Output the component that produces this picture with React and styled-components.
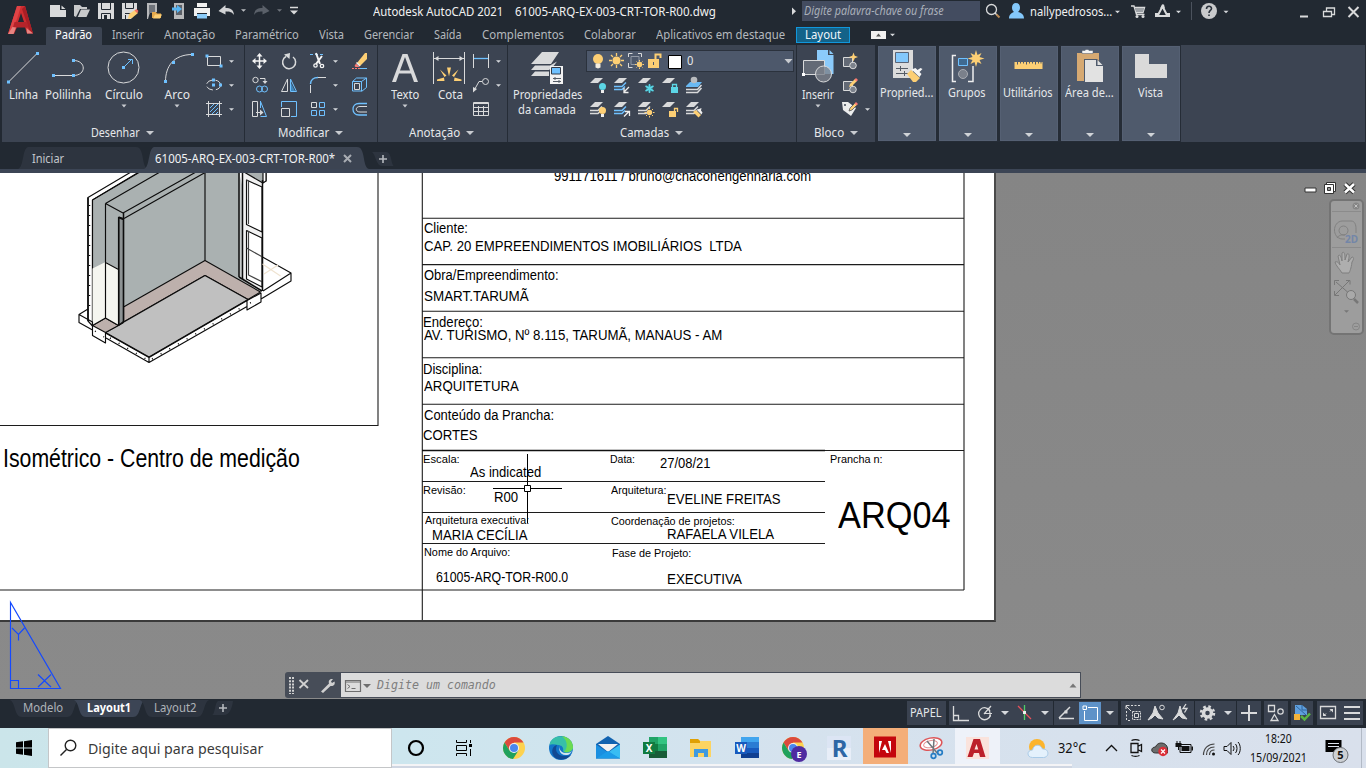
import React, { useLayoutEffect, useRef, useState } from 'react';
import styled, { createGlobalStyle } from 'styled-components';

const Global = createGlobalStyle`
  * { box-sizing: border-box; }
  html, body { margin: 0; padding: 0; overflow: hidden; background: #222932; }
  svg { display: block; flex: none; }
`;

const UI = '"Noto Sans", "Open Sans", sans-serif';
const CAD = '"Liberation Sans", Arial, sans-serif';
const BLUE = '#6fc1ff';
const LIGHT = '#d9dadb';
const GOLD = '#fdcf74';

/* ---------- shared parts ---------- */

const FitBox = styled.span`
  display: block;
  flex: none;
  width: ${(p) => p.$w}px;
  white-space: pre;
`;
const FitInner = styled.span`
  display: inline-block;
  transform-origin: 0 50%;
`;

/* Condenses or widens a label so that it takes exactly w pixels. */
function Fit({ w, children, className }) {
  const ref = useRef(null);
  const [k, setK] = useState(1);
  useLayoutEffect(() => {
    setK(w / ref.current.offsetWidth);
  }, [w]);
  return (
    <FitBox $w={w} className={className}>
      <FitInner ref={ref} style={{ transform: `scaleX(${k})` }}>{children}</FitInner>
    </FitBox>
  );
}

/* Icon whose drawing uses window coordinates; box = [x, y, width, height]. */
const Icon = ({ box, children, ...rest }) => (
  <svg width={box[2]} height={box[3]} viewBox={box.join(' ')} fill="none" {...rest}>{children}</svg>
);

const Caret = ({ x, y, s = 2.5, fill = '#d5d8dc' }) => (
  <path d={`M${x - s} ${y - s / 2}h${2 * s}l${-s} ${s}z`} fill={fill} />
);

const Sq = ({ x, y, c = BLUE, s = 3 }) => <rect x={x - s / 2} y={y - s / 2} width={s} height={s} fill={c} />;

const Window = styled.div`
  width: 1366px;
  height: 768px;
  display: flex;
  flex-direction: column;
  overflow: hidden;
  font-family: ${UI};
  font-size: 12px;
  line-height: 16px;
  color: #e6e8ea;
  background: #222932;
`;

/* ---------- title bar and ribbon tabs ---------- */

const Header = styled.header`
  height: 45px;
  flex: none;
  display: grid;
  grid-template-columns: 46px 1320px;
`;
const HeaderMain = styled.div`
  display: flex;
  flex-direction: column;
`;
const TitleRow = styled.div`
  height: 27px;
  display: flex;
  align-items: flex-start;
`;
const TitleText = styled(Fit)`
  margin: 4px 0 0 ${(p) => p.$ml}px;
  color: #f1f1f1;
`;
const SearchBox = styled.div`
  width: 178px;
  height: 20px;
  margin: 1px 0 0 6px;
  padding: 2px 2px;
  background: #434c60;
  color: #a9afb9;
  font-style: italic;
`;
const TabRow = styled.nav`
  height: 18px;
  display: flex;
`;
const RibbonTab = styled.div`
  padding: 0 10px 0 ${(p) => (p.$on ? 9 : 10)}px;
  height: 18px;
  color: ${(p) => (p.$on ? '#fff' : '#b4b8bd')};
  background: ${(p) => (p.$on ? '#3c4452' : 'transparent')};
  border-radius: 2px 2px 0 0;
`;
const LayoutTab = styled.div`
  width: 54px;
  height: 16px;
  margin-left: 1px;
  padding-left: 8px;
  line-height: 14px;
  border: 1px solid #1197dc;
  background: #146389;
  color: #eef5fa;
`;

const TABS = [
  ['Padrão', 37, true], ['Inserir', 32], ['Anotação', 51], ['Paramétrico', 64], ['Vista', 25],
  ['Gerenciar', 50], ['Saída', 28], ['Complementos', 82], ['Colaborar', 52], ['Aplicativos em destaque', 129],
];

function QuickAccess() {
  return (
    <Icon box={[46, 0, 258, 27]}>
      <path d="M50 5h10v5h6v7H50zM61.500 5.500l4 3.500h-4z" fill={LIGHT} />
      <path d="M74 16V5h6l2 2h5v2h-7l-4 8zM78 16.500l3-7h9l-3.500 7.500h-9z" fill="#c9cacb" />
      <path d="M98 3h16v16H98z" fill={LIGHT} />
      <path d="M101.500 3v6.500h9V3M101.500 19v-5.500h9V19" stroke="#222932" />
      <path d="M104 15h3v4h-3z" fill="#222932" />
      <path d="M122 3h15v8l-6 8h-9z" fill={LIGHT} />
      <path d="M125.500 3v5.500h8V3M125 13.500h6M125.500 19v-4" stroke="#222932" />
      <path d="M129 14l6-4 3 3-6 5-4 1z" fill={GOLD} /><path d="M134.500 10.500l2-1.500 2 2-1.500 2z" fill="#f46e63" />
      <path d="M147 3h10v9h-7l-2 7h-1z" fill="#b7b8ba" /><path d="M149 5h6v8h-6z" fill="#6f737a" />
      <path d="M152 12h4l1 1.500h4V18h-9z" fill="#e5a94c" /><path d="M155 14.500h7l-2 4h-7z" fill={GOLD} />
      <path d="M174 3h10v16h-10z" fill="#b7b8ba" /><path d="M176 5h6v10h-6z" fill="#5b6068" />
      <path d="M172 7.500h5V5l5 4-5 4v-2.500h-5z" fill="#56b4f2" />
      <path d="M197 3h10v4h-10zM194 8h16v8h-3v-3h-10v3h-3z" fill="#f1f1f1" /><path d="M197 14h10v4.500h-10z" fill="#8bcbf8" />
      <path d="M218.500 11l7-6v3c5 0 8 1.500 8.500 7-2-3-4-3.500-8.500-3.500v3z" fill="#d2d3d5" />
      <Caret x={243.500} y={10.500} fill="#b9bcc0" />
      <path d="M269.500 11l-7-6v3c-5 0-8 1.500-8.500 7 2-3 4-3.500 8.500-3.500v3z" fill="#5a6069" />
      <Caret x={279.500} y={10.500} fill="#70757d" />
      <path d="M290 7.500h8" stroke={LIGHT} strokeWidth="1.500" /><path d="M290 10.500h8l-4 4z" fill={LIGHT} />
    </Icon>
  );
}

function TopBar() {
  return (
    <Header>
      <Icon box={[0, 0, 46, 45]}>
        <path d="M17 6h8l8 27.500h-6L25 27h-8l-3 7H8zM21 13l-3 9h6z" fill="#cf2e31" fillRule="evenodd" />
        <path d="M17 6h4l-4 13-4 9-5 6z" fill="#e04346" />
        <path d="M25 6l8 27.500-4-4L22 9z" fill="#a91e25" />
        <path d="M14.500 22H27l1.500 5.500H13z" fill="#b5242a" />
        <path d="M12.500 27L8 34h5.500l2.500-6.500zM26.500 28l.5 5.500h6z" fill="#e78481" />
      </Icon>
      <HeaderMain>
        <TitleRow>
          <QuickAccess />
          <TitleText w={130} $ml={69}>Autodesk AutoCAD 2021</TitleText>
          <TitleText w={201} $ml={12}>61005-ARQ-EX-003-CRT-TOR-R00.dwg</TitleText>
          <Icon box={[716, 0, 80, 27]}><path d="M792 7.500v7.500l4-3.750z" fill={LIGHT} /></Icon>
          <SearchBox><Fit w={140}>Digite palavra-chave ou frase</Fit></SearchBox>
          <Icon box={[980, 0, 50, 27]}>
            <circle cx="991.500" cy="9.500" r="5" stroke={LIGHT} strokeWidth="1.300" /><path d="M995 13l2 2" stroke={LIGHT} strokeWidth="1.500" /><path d="M996.500 14.500l3 3" stroke="#b98853" strokeWidth="2" />
            <path d="M1009 18.500c0-4 3-6 5-6.500-1.500-1-2-3-2-4.500 0-2.500 1.500-4.500 4-4.500s4 2 4 4.500c0 1.500-.5 3.500-2 4.500 3 .5 6 2.500 6 6.500z" fill="#84c8fb" />
          </Icon>
          <TitleText w={82} $ml={0}>nallypedrosos...</TitleText>
          <Icon box={[1112, 0, 254, 27]}>
            <Caret x={1117.500} y={12} />
            <path d="M1131 6h3l2.500 8.500h8M1135 7.500h9.500l-1.500 5h-7" stroke={LIGHT} strokeWidth="1.400" /><path d="M1135 8h9l-1 4h-7z" fill="#9da1a6" /><circle cx="1137" cy="16.500" r="1.500" fill={LIGHT} /><circle cx="1143" cy="16.500" r="1.500" fill={LIGHT} />
            <path d="M1162.500 6.500l-5 9.500h10z" stroke={LIGHT} strokeWidth="2" /><path d="M1160 8.500l2-4h2l1 4zM1155 13h4v4h-4zM1166 13h4v4h-4z" fill={LIGHT} />
            <Caret x={1178.500} y={12} />
            <path d="M1191.500 2v18" stroke="#4b525d" />
            <circle cx="1209" cy="11" r="8" fill="#c9cacc" />
            <path d="M1206.500 9c0-3.500 5-3.500 5-.5 0 2-2.500 2-2.500 4.500M1209 14.500v1.500" stroke="#2b323c" strokeWidth="1.600" />
            <Caret x={1226} y={12} />
            <path d="M1300 16.500h8" stroke={LIGHT} strokeWidth="2" />
            <path d="M1323.500 11.500h8v5h-8zM1326.500 11V8h8v6.500h-3" stroke={LIGHT} strokeWidth="1.300" />
            <path d="M1348.500 7l10 10M1358.500 7l-10 10" stroke={LIGHT} strokeWidth="2" />
          </Icon>
        </TitleRow>
        <TabRow>
          {TABS.map(([t, w, on]) => <RibbonTab key={t} $on={on}><Fit w={w}>{t}</Fit></RibbonTab>)}
          <LayoutTab><Fit w={36}>Layout</Fit></LayoutTab>
          <Icon box={[851, 27, 50, 18]}>
            <path d="M872 31h15v8h-15z" fill="#f0f0f0" /><path d="M877 36.500l2.500-3 2.500 3z" fill="#555" />
            <Caret x={893.500} y={35} s={2.500} />
          </Icon>
        </TabRow>
      </HeaderMain>
    </Header>
  );
}

/* ---------- ribbon ---------- */

const RibbonBar = styled.section`
  height: 97px;
  flex: none;
  display: flex;
  padding-left: 2px;
`;
const PanelBox = styled.div`
  width: ${(p) => p.$w}px;
  height: 97px;
  display: flex;
  flex-direction: column;
  background: #3c4452;
  border-right: 1px solid #252c36;
`;
const PanelBody = styled.div`
  height: 79px;
  display: flex;
`;
const PanelTitle = styled.div`
  height: 18px;
  display: flex;
  align-items: center;
  justify-content: center;
  gap: 6px;
  padding-right: 2px;
`;
const BigButton = styled.div`
  width: ${(p) => p.$w}px;
  display: flex;
  flex-direction: column;
  align-items: center;
  flex: none;
`;
const BigLabel = styled(Fit)`
  height: 15px;
`;
const ToolGrid = styled.div`
  display: grid;
  grid-template-columns: ${(p) => p.$cols};
  grid-auto-rows: 24px;
  padding-top: ${(p) => p.$top ?? 4}px;
  align-content: start;
`;
const Collapsed = styled.div`
  width: 58px;
  height: 95px;
  margin: 1px 0 0 3px;
  display: flex;
  flex-direction: column;
  align-items: center;
  background: #4f5a6c;
  border: 1px solid #556073;
`;
const CollapsedLabel = styled(Fit)`
  position: relative;
  left: -1px;
`;
const CollapsedArea = styled.div`
  width: 306px;
  display: flex;
  background: #252c36;
  margin-left: -2px;
`;
const RibbonRest = styled.div`
  flex: 1;
  background: #3c4452;
  margin-right: 1px;
`;
const LayerColumn = styled.div`
  display: flex;
  flex-direction: column;
`;
const LayerCombo = styled.div`
  width: 208px;
  height: 22px;
  margin-top: 5px;
  display: flex;
  align-items: center;
  background: #4d586b;
  border: 1px solid #2b323d;
`;

function Panel({ w, title, tw, children }) {
  return (
    <PanelBox $w={w}>
      <PanelBody>{children}</PanelBody>
      <PanelTitle>
        <Fit w={tw}>{title}</Fit>
        <svg width="8" height="5"><path d="M0 0h8l-4 4z" fill="#c8cbd0" /></svg>
      </PanelTitle>
    </PanelBox>
  );
}

function Big({ x, w, label, lw, caret, children }) {
  return (
    <BigButton $w={w}>
      <Icon box={[x, 45, w, 42]}>{children}</Icon>
      <BigLabel w={lw}>{label}</BigLabel>
      {caret && <svg width="6" height="8"><path d="M.5 2.500h5L3 5.500z" fill="#c8cbd0" /></svg>}
    </BigButton>
  );
}

const Layer = ({ x, y, multi, accent }) => (
  <g>
    <path d={`M${x} ${y + 5}l5-5h8l-5 5z`} fill={LIGHT} />
    {multi && <path d={`M${x} ${y + 8.500}h8l4-4M${x} ${y + 11.500}h8l3-3`} stroke={accent || LIGHT} strokeWidth="1.500" />}
  </g>
);

function Ribbon() {
  return (
    <RibbonBar>
      <Panel w={243} title="Desenhar" tw={49}>
        <Big x={2} w={42} label="Linha" lw={29}>
          <path d="M8.500 82l29-29" stroke={LIGHT} /><Sq x={8.500} y={82} /><Sq x={37.500} y={53.500} />
        </Big>
        <Big x={44} w={48} label="Polilinha" lw={46}>
          <path d="M53.500 75.500h20c13 0 13-15 0-15" stroke={LIGHT} /><Sq x={53.500} y={75.500} /><Sq x={73.500} y={75.500} /><Sq x={73.500} y={60.500} />
        </Big>
        <Big x={92} w={64} label="Círculo" lw={38} caret>
          <circle cx="123.500" cy="67.500" r="15.500" stroke={LIGHT} /><path d="M123.500 67.500l8-8M128 59.500h4.500V64" stroke={BLUE} /><Sq x={123.500} y={67.500} />
        </Big>
        <Big x={156} w={42} label="Arco" lw={25} caret>
          <path d="M165.500 81.500c0-15 8-27 27-27" stroke={LIGHT} /><Sq x={165.500} y={81.500} /><Sq x={173.500} y={62.500} /><Sq x={192.500} y={54.500} />
        </Big>
        <ToolGrid $cols="44px">
          <Icon box={[198, 49, 44, 24]}><path d="M207.500 56.500h13v9h-13z" stroke={LIGHT} /><Sq x={207} y={56} /><Sq x={221} y={66} /><Caret x={231.500} y={61.500} /></Icon>
          <Icon box={[198, 73, 44, 24]}><ellipse cx="213.500" cy="85" rx="7" ry="5" stroke={LIGHT} strokeDasharray="7 3" /><Sq x={213.500} y={80} /><Sq x={213.500} y={85} /><Sq x={220.500} y={85} /><Caret x={231.500} y={85.500} /></Icon>
          <Icon box={[198, 97, 44, 24]}><path d="M208.500 101v16M219.500 101v16M206 103.500h16M206 114.500h16" stroke={LIGHT} /><path d="M210 108l4-4M210 112l8-8M212 114l6-6M216 114l2-2" stroke={BLUE} /><Caret x={231.500} y={109.500} /></Icon>
        </ToolGrid>
      </Panel>

      <Panel w={133} title="Modificar" tw={51}>
        <ToolGrid $cols="29px 30px 40px 33px">
          <Icon box={[245, 49, 29, 24]}><path d="M259.500 55v12M253.500 61h12" stroke="#f5f5f5" strokeWidth="1.500" /><path d="M256.500 56.500l3-3.500 3 3.500zM256.500 65.500l3 3.500 3-3.500zM255.500 58l-3.500 3 3.500 3zM263.500 58l3.500 3-3.500 3z" fill="#f5f5f5" /></Icon>
          <Icon box={[274, 49, 30, 24]}><path d="M286 56.500a6.500 6.500 0 1 0 7 .5" stroke={LIGHT} strokeWidth="1.500" /><path d="M284 54.500l6-1.500-.5 6z" fill={LIGHT} /></Icon>
          <Icon box={[304, 49, 40, 24]}><path d="M310 54.500h15" stroke={BLUE} strokeDasharray="3 2" /><path d="M316 53l4 11M322 56l-6 8" stroke="#f5f5f5" strokeWidth="2" /><circle cx="315.500" cy="65.500" r="1.700" stroke="#f5f5f5" strokeWidth="1.300" /><circle cx="322" cy="66" r="1.700" stroke="#f5f5f5" strokeWidth="1.300" /><Caret x={335.500} y={61.500} /></Icon>
          <Icon box={[344, 49, 33, 24]}><path d="M357 63l8-10h2v6l-7 7z" fill={GOLD} /><path d="M356 63.500l3.500 3.500h-4l-1-1z" fill="#ff7b73" /><path d="M356.500 62.500l3.500 3.500" stroke="#eee" strokeWidth="1.500" /><path d="M352 68.500h8" stroke="#ff7b73" strokeDasharray="2 1" /><path d="M360 68.500h7" stroke={BLUE} /></Icon>
          <Icon box={[245, 73, 29, 24]}><circle cx="255.500" cy="80" r="2.700" stroke={LIGHT} /><path d="M260 78.500h5v3" stroke={LIGHT} /><path d="M262.500 81h5l-2.500 3z" fill={LIGHT} /><circle cx="259.500" cy="89" r="3" stroke={BLUE} /><circle cx="264.500" cy="89" r="3" stroke={BLUE} /></Icon>
          <Icon box={[274, 73, 30, 24]}><path d="M287.500 79v12.500h-6z" stroke={LIGHT} /><path d="M290.500 79v12.500h6z" stroke={BLUE} /><path d="M291 83v8h4z" fill="#3f87bd" /></Icon>
          <Icon box={[304, 73, 40, 24]}><path d="M310.500 85v8M318 77.500h8" stroke={LIGHT} /><path d="M310.500 84c0-4 3-6.500 7.500-6.500" stroke={BLUE} strokeWidth="1.500" /><Caret x={335.500} y={85.500} /></Icon>
          <Icon box={[344, 73, 33, 24]}><path d="M352.500 81.500h9v9.500h-9zM352.500 81.500l4-3.500h10l-5 3.500M366.500 78v9.500l-5 4" stroke={BLUE} /><path d="M354.500 83.500h5v6h-5z" stroke={LIGHT} /></Icon>
          <Icon box={[245, 97, 29, 24]}><path d="M252.500 101.500h5v15h-5zM256 112.500h5" stroke={LIGHT} /><path d="M260 109.500l3.500 3-3.500 3z" fill={LIGHT} /><path d="M260.500 101.500l6 15h-6M260.500 101v7" stroke={BLUE} /></Icon>
          <Icon box={[274, 97, 30, 24]}><path d="M281.500 108.500h8v8h-8z" stroke={LIGHT} /><path d="M281.500 107v-5.500h15v15H291" stroke={BLUE} /></Icon>
          <Icon box={[304, 97, 40, 24]}><path d="M311.500 102.500h5v5h-5z" stroke={LIGHT} /><path d="M319.500 102.500h5v5h-5zM319.500 110.500h5v5h-5zM311.500 110.500h5v5h-5z" stroke={BLUE} /><Caret x={335.500} y={109.500} /></Icon>
          <Icon box={[344, 97, 33, 24]}><path d="M367 103.500h-8c-8 0-8 11.500 0 11.500h8" stroke={BLUE} strokeWidth="1.300" /><path d="M367 106.500h-7c-5 0-5 5.500 0 5.500h7" stroke={LIGHT} /></Icon>
        </ToolGrid>
      </Panel>

      <Panel w={130} title="Anotação" tw={51}>
        <Big x={378} w={54} label="Texto" lw={28} caret>
          <path d="M392 82L402.500 54h5L418 82h-4l-3-8.500h-12l-3 8.500zM400 70.500h10L405 57z" fill={LIGHT} fillRule="evenodd" />
        </Big>
        <Big x={432} w={36} label="Cota" lw={25}>
          <path d="M433.500 52v32M464.500 52v32M434 58.500h30" stroke={LIGHT} /><path d="M434.500 58.500l4-2.500v5zM463.500 58.500l-4-2.500v5z" fill={LIGHT} />
          <path d="M447 67.500l2 9 2-9zM440 69.500l4.500 7.500 2-1.500zM458.500 69.500l-4.500 7.500-2-1.500zM437 79.500l7-2 .5 3.500h-7.500zM461.500 79.500l-7-2-.5 3.500h7.500z" fill={GOLD} />
        </Big>
        <ToolGrid $cols="39px">
          <Icon box={[468, 49, 39, 24]}><path d="M473.500 54v14M488.500 54v14" stroke={LIGHT} /><path d="M474 58.500h14" stroke={BLUE} strokeWidth="1.300" /><Caret x={498.500} y={61.500} /></Icon>
          <Icon box={[468, 73, 39, 24]}><circle cx="485.500" cy="81.500" r="3" stroke={LIGHT} /><path d="M482 81.500h-3l-5 9" stroke={LIGHT} /><path d="M473 87l4 2-4 3.500z" fill={LIGHT} /><Caret x={498.500} y={85.500} /></Icon>
          <Icon box={[468, 97, 39, 24]}><path d="M473.500 102.500h15v13h-15zM473 107.500h16M473 111.500h16M478.500 106v10M483.500 106v10M473 103.500h16" stroke={LIGHT} /></Icon>
        </ToolGrid>
      </Panel>

      <Panel w={289} title="Camadas" tw={49}>
        <BigButton $w={78}>
          <Icon box={[508, 45, 78, 42]}>
            <path d="M531 64l11-12h17l-8 12zM531 70l4-4.500h15l7-4-3 4-5 4.500zM531 76l4-4.500h14v4.500z" fill={LIGHT} />
            <path d="M550 66h13v18h-13z" fill="#f2f2f2" /><path d="M551.500 67.500h9v6.500h-9z" fill={BLUE} stroke="#333b48" /><path d="M553 78.500h8M553 81.500h8M555 77v3M559 80v3" stroke="#555c66" />
          </Icon>
          <BigLabel w={69}>Propriedades</BigLabel>
          <BigLabel w={58}>da camada</BigLabel>
        </BigButton>
        <LayerColumn>
          <LayerCombo>
            <Icon box={[587, 51, 100, 20]}>
              <circle cx="598" cy="59" r="5" fill={GOLD} /><path d="M595.500 63.500h5v4l-2.500 1-2.500-1z" fill="#f3ede0" />
              <circle cx="616.500" cy="60.500" r="4" fill={GOLD} /><path d="M616.500 53v3M616.500 65v3M609 60.500h3M621 60.500h3M611 55l2 2M622 55l-2 2M611 66l2-2M622 66l-2-2" stroke={GOLD} strokeWidth="1.300" />
              <path d="M628.500 57v-3.500h4M638 53.500h3.500V57M628.500 63v4.500h4" stroke={LIGHT} /><path d="M631 56.500h8v8h-8z" stroke="#9299a5" /><circle cx="639.500" cy="64.500" r="2.700" fill={GOLD} /><path d="M639.500 60v9M635 64.500h9M636.500 61.500l6 6M642.500 61.500l-6 6" stroke={GOLD} strokeDasharray="1.500 6" />
              <path d="M648 59h11v9h-11z" fill={GOLD} /><path d="M655.500 59v-4.500h5V58" stroke={GOLD} strokeWidth="2" /><path d="M653.500 62v3" stroke="#4d586b" />
              <path d="M668.500 55.500h13v13h-13z" fill="#fff" stroke="#000" />
            </Icon>
            <Fit w={6.500}>0</Fit>
            <Icon box={[693.5, 51, 99, 20]}><path d="M784 59h8l-4 4.500z" fill="#c8cbd0" /></Icon>
          </LayerCombo>
          <ToolGrid $cols="repeat(5, 24px)" $top={2}>
            <Icon box={[586, 74, 24, 24]}><Layer x={590} y={78} /><circle cx="602.500" cy="86.500" r="3.500" fill="#5cd6e6" /><path d="M601 90h3v3h-3z" fill="#eee" /></Icon>
            <Icon box={[610, 74, 24, 24]}><Layer x={614} y={78} multi accent={BLUE} /><path d="M629 87l-5 5M624 88v4.500h4.500" stroke="#eee" strokeWidth="1.300" /></Icon>
            <Icon box={[634, 74, 24, 24]}><Layer x={638} y={78} /><circle cx="649.500" cy="88.500" r="3.200" fill="#2e8e9c" /><path d="M649.500 84v9M645.500 86l8 5M653.500 86l-8 5" stroke="#5cd6e6" strokeWidth="1.500" /></Icon>
            <Icon box={[658, 74, 24, 24]}><Layer x={662} y={78} /><path d="M671 87h7v6h-7z" fill="#5cd6e6" /><path d="M672.500 87v-2.500h4V87" stroke="#5cd6e6" strokeWidth="1.300" /></Icon>
            <Icon box={[682, 74, 24, 24]}><path d="M686 86l4-4h12l-4 5h-12z" fill="#69b9f3" /><path d="M686 89.500h11.500l4-4.500M686 92.500h11.500l4-4.500" stroke={LIGHT} strokeWidth="1.500" /><circle cx="694" cy="80" r="3.300" fill="#b9bbbe" /></Icon>
            <Icon box={[586, 98, 24, 24]}><Layer x={590} y={102} multi /><circle cx="602.500" cy="110.500" r="3.500" fill={GOLD} /><path d="M601 114h3v3h-3z" fill="#eee" /></Icon>
            <Icon box={[610, 98, 24, 24]}><Layer x={614} y={102} multi accent={BLUE} /><path d="M624 116.500l5-5M625 111.500h4.500v4.500" stroke="#eee" strokeWidth="1.300" /></Icon>
            <Icon box={[634, 98, 24, 24]}><Layer x={638} y={102} multi /><circle cx="649.500" cy="112.500" r="2.700" fill={GOLD} /><path d="M649.500 107.500v10M644.500 112.500h10M646 109l7 7M653 109l-7 7" stroke={GOLD} strokeDasharray="1.500 7" /></Icon>
            <Icon box={[658, 98, 24, 24]}><Layer x={662} y={102} /><path d="M669 111h7v6h-7z" fill={GOLD} /><path d="M674.500 111v-2.500h3V112" stroke={GOLD} strokeWidth="1.300" /></Icon>
            <Icon box={[682, 98, 24, 24]}><Layer x={686} y={102} multi /><path d="M693 112l3-2 5 5-2.500 2.500z" fill={GOLD} /><path d="M696.500 109.500l5 5 1-2-1.500-2 .5-2.500-2.500 1z" fill="#eee" /></Icon>
          </ToolGrid>
        </LayerColumn>
      </Panel>

      <Panel w={80} title="Bloco" tw={30}>
        <Big x={797} w={41} label="Inserir" lw={32} caret>
          <path d="M817 50h11v5h5.500v19H817z" fill="#8bcbfb" /><path d="M829.500 50l4 4h-4z" fill="#8bcbfb" />
          <path d="M803.500 60.500h21v14h-21z" fill="#636a76" stroke={LIGHT} /><circle cx="823.500" cy="74" r="8" fill="#7c828c" fillOpacity=".8" stroke={LIGHT} /><Sq x={803.500} y={74.500} c="#fff" />
        </Big>
        <ToolGrid $cols="36px">
          <Icon box={[838, 49, 36, 24]}><path d="M843.500 57.500h9v9h-9z" fill="#636a76" stroke={LIGHT} /><circle cx="853" cy="65.500" r="3.300" fill="#7c828c" stroke={LIGHT} /><path d="M853.500 52.500l1.200 3.300 3.300 1.200-3.300 1.200-1.200 3.300-1.200-3.300-3.300-1.200 3.300-1.200z" fill={GOLD} /></Icon>
          <Icon box={[838, 73, 36, 24]}><path d="M843.500 81.500h9v9h-9z" fill="#636a76" stroke={LIGHT} /><circle cx="853" cy="89.500" r="3.300" fill="#7c828c" stroke={LIGHT} /><path d="M850 84l5-5 2 2-5 5-3 1z" fill={GOLD} /><path d="M854.500 79.500l1.500-1.500 2 2-1.500 1.500z" fill="#ff7b73" /></Icon>
          <Icon box={[838, 97, 36, 24]}><path d="M842 102h6l8 6-5 8-8-6z" fill="#eceded" /><path d="M850 108l5-5 2 2-5 5-3 1z" fill={GOLD} stroke="#3c4452" strokeWidth=".7" /><path d="M854.500 103.500l1.500-1.500 2 2-1.500 1.500z" fill="#ff7b73" /><circle cx="845" cy="105" r="1" fill="#3c4452" /><Caret x={867.500} y={109.500} /></Icon>
        </ToolGrid>
      </Panel>

      <CollapsedArea>
        <CollapsedPanel x={878} label="Propried..." lw={53}>
          <path d="M893 50h20v28h-20z" fill="#dcdcdc" /><path d="M895.500 52.500h13v10h-13z" fill="#84c8fb" stroke="#5a6577" /><path d="M896 68.500h12M896 73.500h12M900.500 66v5M904.500 71v5" stroke="#555c66" />
          <path d="M907 74l4-4 9 8-4 4h-3z" fill={GOLD} /><path d="M911.500 69.500l8 7.500 2-3-2-2 3-3-2-1-3 2-2-2z" fill="#f5f5f5" />
        </CollapsedPanel>
        <CollapsedPanel x={939} label="Grupos" lw={38}>
          <path d="M956 55.500h-3.500v26h3.500M968 81.500h5V66" stroke="#eee" strokeWidth="1.500" /><path d="M958.500 58.500h9v7h-9z" stroke={BLUE} fill="#3f6a91" /><circle cx="963" cy="74" r="4.500" stroke="#a7abb2" fill="#7a808b" />
          <path d="M976 50l1.500 5 4-2-2 4 5 1.500-5 1.500 2 4-4-2-1.500 5-1.500-5-4 2 2-4-5-1.500 5-1.500-2-4 4 2z" fill={GOLD} />
        </CollapsedPanel>
        <CollapsedPanel x={1000} label="Utilitários" lw={50}>
          <path d="M1014.500 62h28v7h-28z" fill={GOLD} /><path d="M1017.500 61.500v3M1020.500 61.500v2M1023.500 61.500v2M1026.500 61.500v3M1029.500 61.500v2M1032.500 61.500v2M1035.500 61.500v3M1038.500 61.500v2M1041 61.500v2" stroke="#4f5a6c" />
        </CollapsedPanel>
        <CollapsedPanel x={1061} label="Área de..." lw={49}>
          <path d="M1077 53h22v28h-22z" fill="#d6a972" /><path d="M1082 50.500h3c0-1.500 4-1.500 4 0h4v3h-11z" fill="#f4f4f4" stroke="#4f5a6c" strokeWidth=".5" /><path d="M1084 59h13l6 6v17h-19z" fill="#4f5a6c" /><path d="M1085 60h11v6h7v16h-18zM1097.500 60l5 5h-5z" fill="#e2e2e2" />
        </CollapsedPanel>
        <CollapsedPanel x={1122} label="Vista" lw={25}>
          <path d="M1135 54h14v10h18v14h-32z" fill="#dadada" />
        </CollapsedPanel>
      </CollapsedArea>
      <RibbonRest />
    </RibbonBar>
  );
}

function CollapsedPanel({ x, label, lw, children }) {
  return (
    <Collapsed>
      <Icon box={[x + 1, 47, 56, 38]}>{children}</Icon>
      <CollapsedLabel w={lw}>{label}</CollapsedLabel>
      <Icon box={[x + 1, 101, 56, 40]}><path d={`M${x + 25} 133h8l-4 4z`} fill="#d0d3d7" /></Icon>
    </Collapsed>
  );
}

/* ---------- file tabs ---------- */

const FileTabs = styled.div`
  height: 31px;
  flex: none;
  display: flex;
  align-items: flex-start;
  padding: 5px 0 0 18px;
  background: #222932;
  border-bottom: 4px solid #3c4555;
`;
const FileTab = styled.div`
  width: ${(p) => p.$w}px;
  height: 22px;
  display: flex;
  align-items: center;
  gap: 8px;
  padding: 1px 0 0 ${(p) => (p.$on ? 11 : 14)}px;
  margin-right: -4px;
  color: ${(p) => (p.$on ? '#f1f3f5' : '#c3c7cc')};
  background: ${(p) => (p.$on ? '#3c4452' : '#2d343f')};
  clip-path: path('${(p) => `M0 22C6 20 4 2 10 0H${p.$w - 12}C${p.$w - 3} 0 ${p.$w - 7} 20 ${p.$w} 22Z`}');
`;
const NewTab = styled.div`
  margin-left: 5px;
`;

/* ---------- drawing viewport ---------- */

const Viewport = styled.main`
  position: relative;
  height: 526px;
  flex: none;
  overflow: hidden;
  background: linear-gradient(180deg, #858585, #8a8a8a);
`;
const Sheet = styled.div`
  width: 996px;
  height: 449px;
  background: #fff;
  border-right: 2px solid #4a4a4a;
  border-bottom: 2px solid #3a3a3a;
`;
const DrawingLayer = styled.div`
  position: absolute;
  inset: 0;
`;
/* A text entity of the drawing, placed at its model point. */
const CadText = styled(Fit)`
  position: absolute;
  left: ${(p) => p.$x - 0.5}px;
  top: ${(p) => Math.floor(p.$cy - 184)}px;
  line-height: 20px;
  font-family: ${CAD};
  font-size: ${(p) => p.$size || 14}px;
  color: #000;
`;
const TEXTS = [
  [554, 177, 257, '991171611 / bruno@chaconengenharia.com'],
  [424.5, 229, 43.5, 'Cliente:'],
  [424.5, 247.5, 317.5, 'CAP. 20 EMPREENDIMENTOS IMOBILIÁRIOS  LTDA'],
  [424.5, 276, 135, 'Obra/Empreendimento:'],
  [424.5, 297.500, 104.5, 'SMART.TARUMÃ'],
  [423.5, 323, 60, 'Endereço:'],
  [424.5, 336.500, 298, 'AV. TURISMO, Nº 8.115, TARUMÃ, MANAUS - AM'],
  [423.5, 370, 59.5, 'Disciplina:'],
  [424.5, 387.500, 94.5, 'ARQUITETURA'],
  [424.5, 416, 130, 'Conteúdo da Prancha:'],
  [423.5, 436.500, 54.5, 'CORTES'],
  [423.5, 460, 37, 'Escala:', 11.5],
  [470, 473, 71, 'As indicated'],
  [610, 460, 25.500, 'Data:', 11.5],
  [660.500, 464.500, 51, '27/08/21'],
  [830.500, 460, 53, 'Prancha n:', 11.5],
  [423.5, 491, 43, 'Revisão:', 11.5],
  [494.500, 498.500, 24.500, 'R00'],
  [611, 491, 55, 'Arquitetura:', 11.5],
  [667.500, 500.500, 113.500, 'EVELINE FREITAS'],
  [425, 521, 104, 'Arquitetura executiva:', 11.5],
  [432.500, 536.500, 95.500, 'MARIA CECÍLIA'],
  [611, 522, 123.500, 'Coordenação de projetos:', 11.5],
  [667.500, 535.500, 107.500, 'RAFAELA VILELA'],
  [424.500, 553, 86, 'Nome do Arquivo:', 11.5],
  [436.500, 578.5, 132.500, '61005-ARQ-TOR-R00.0', 15],
  [612.500, 554, 79, 'Fase de Projeto:', 11.5],
  [667.500, 580.500, 74.500, 'EXECUTIVA'],
  [838.500, 517, 112.500, 'ARQ04', 36],
  [3.500, 459, 297, 'Isométrico - Centro de medição', 26],
];

function IsoDrawing() {
  return (
    <g stroke="#0c0c0c" strokeWidth="1.150" strokeLinejoin="round">
      <path d="M88 197.500L131 172h8L92.500 200v126L88 321z" fill="#fff" />
      <path d="M92.500 200.500L141 172h99v105l21 15-56-31-81.500 46V325H92.500z" fill="#aab1b1" stroke="none" />
      <path d="M205 261v-90M92.500 200L140 172M92.500 200v125" />
      <path d="M88 197.500V321" strokeWidth="1.600" />
      <path d="M239 172v106l23 14v-22z" fill="#c5c9c9" stroke="none" />
      <path d="M205 260.500L260.500 292 248 299.500 205 275.500 123.500 322v-15z" fill="#bdb0ac" />
      <path d="M205 275.500L248 299.500 149 357 105.500 332.500z" fill="#c0c0c0" />
      <path d="M92.500 325.500l13-7.500 13 7.500-13 7z" fill="#bdb0ac" />
      <path d="M92.500 268.500l13-6.500 13 7v56.500L105.500 318l-13 7.500z" fill="#f5f6f0" stroke="none" />
      <path d="M105.500 203.500V318M105.500 262.500l13 7M92.500 325.500l13-7.500 13 7.500M105.500 203.500l17.500 9.500M105.500 203.500L160 172M123 213l73-41M124 218.500L206 172M118.500 217v108.500l5-3" fill="none" />
      <path d="M119 217l4.500 1.500v103l-4.500 3.500z" fill="#8d9293" />
      <path d="M123.500 213v109M118.500 217.500l5 2" strokeWidth="1.500" />
      <path d="M88 309l-9 5.500v8l13.500 7.500M79 314.500l13.500 7.500v13.500l13 7.500v-10l43.500 24.500 99-57.500 13-7v9l-14 8v-9M106 338l43 24.500V357M149 362.500l98-56M261 299l30-18v-8L246.500 248M291 273l-28 18" fill="none" />
      <path d="M242 172l21 11v108l-21-14z" fill="#f2f2f2" stroke="none" />
      <path d="M242.500 172v107M239 172v105" strokeWidth="1.500" />
      <path d="M246.500 180l15.500 7v45l-15.500-7.500zM246.500 230.500l15.500 7.500v49l-15.500-8z" fill="#fff" />
      <path d="M246.500 180l2 1v43M246.500 230.500l2 1V275l14 7M246.500 248l16 9" fill="none" stroke="#444" />
      <path d="M244 172l18 10.500 4-1.500v-9" fill="#aab1b1" /><path d="M263 172v11l3-2v-9" fill="#fff" />
      <path d="M262.500 180v111M239 277l23 14" strokeWidth="1.500" />
      <path d="M262.500 264l18 12M264 274l14-9" stroke="#efe3d0" />
      <path d="M110 338l36 21M152 359l92-53M89.500 205v105M95 331l9 6M250 303l8-3" strokeDasharray="1 9" strokeWidth="1.500" />
    </g>
  );
}

function SheetLines() {
  return (
    <svg width="1366" height="526" viewBox="0 173 1366 526" fill="none">
      <IsoDrawing />
      <g stroke="#1c1c1c" strokeWidth="1.100">
        <path d="M378 173V425.500H0" />
        <path d="M422.300 173V620M964 173V590M0 590H964M422 218.300H964M422 264.600H964M422 311.300H964M422 357.700H964M422 404.300H964M422 450.500H964M422 481.500H825M422 512.500H825M422 543.500H825" />
      </g>
      <path d="M422 450.500H825" stroke="#111" strokeWidth="1.400" />
      <path d="M527.500 454v69M493 488.500h69" stroke="#000" />
      <path d="M524.500 485.500h6v6h-6z" stroke="#000" fill="#fff" />
      <path d="M10.500 602.500V688.500H60.500zM10.500 680.500h8v8M12 628l6.500 6.500 6-6.500M18.500 634.500v6M38 674.500l13 12.500M51 674.500L38 687" stroke="#1449ff" strokeWidth="1.150" />
    </svg>
  );
}

const MdiButtons = styled.div`
  position: absolute;
  top: 6px;
  right: 8px;
`;
const NavBar = styled.div`
  position: absolute;
  top: 26px;
  right: 2px;
  width: 35px;
  height: 136px;
  background: #9d9d9d;
  border: 2px solid #747474;
  border-radius: 5px;
`;
const NavLabel = styled(Fit)`
  position: absolute;
  left: 14px;
  top: 31px;
  font: bold 10px ${UI};
  line-height: 14px;
  color: #7386a8;
`;
const CommandBar = styled.div`
  position: absolute;
  left: 285px;
  bottom: 1px;
  width: 796px;
  height: 26px;
  display: flex;
  background: #474d58;
  border-radius: 3px 0 0 3px;
`;
const CommandInput = styled.div`
  flex: 1;
  margin: 1px 1px 1px 0;
  display: flex;
  align-items: center;
  background: #dcdcdc;
  color: #7e7e7e;
  font: italic 12px "DejaVu Sans Mono", monospace;
`;

function Canvas() {
  return (
    <Viewport>
      <Sheet />
      <DrawingLayer>
        <SheetLines />
        {TEXTS.map(([x, cy, w, t, size]) => <CadText key={t} $x={x} $cy={cy} $size={size} w={w}>{t}</CadText>)}
      </DrawingLayer>
      <MdiButtons>
        <Icon box={[1302, 179, 56, 18]}>
          <path d="M1305 188h11v4h-11z" fill="#fff" stroke="#333" />
          <path d="M1326.500 182.500h9v9h-9z" fill="#fff" stroke="#333" /><path d="M1324.500 184.500h9v9h-9z" fill="#fff" stroke="#333" /><path d="M1327.500 187.500h3v3h-3z" stroke="#333" fill="#999" />
          <path d="M1345 184l9 8.500M1354 184l-9 8.500" stroke="#333" strokeWidth="4.500" /><path d="M1345 184l9 8.500M1354 184l-9 8.500" stroke="#fff" strokeWidth="2.500" />
        </Icon>
      </MdiButtons>
      <NavBar>
        <Icon box={[1331, 201, 31, 132]}>
          <circle cx="1356" cy="206" r="3.500" fill="#858585" /><path d="M1354.500 204.500l3 3M1357.500 204.500l-3 3" stroke="#c4c4c4" />
          <path d="M1332 211.500h29M1332 247.500h29" stroke="#8b8b8b" />
          <path d="M1345 239h-3c-10-1-10-17 0-18h9c4 0 5 4 5 8v4" stroke="#818181" /><circle cx="1343.500" cy="230.500" r="4.500" stroke="#818181" /><path d="M1337 238c2-3 5-3.500 8-3" stroke="#818181" />
          <path d="M1342 273c-3-5-6-7-7-11 2-1 4 1 5 3l-2-9c2-2 3 0 4 5l0-8c2-2 3 0 3 7l2-6c2-1 3 1 1 8l4-5c2 0 2 2 0 5-1 7-2 9-3 11z" fill="#aeaeae" stroke="#7f7f7f" />
          <path d="M1336 282l15 13M1349 281l-14 14M1334.500 285v-4.500h4.500M1346 280.500h4v4M1334.500 291v4.500h4.500" stroke="#777" /><circle cx="1351" cy="295" r="4.500" fill="#a9a9a9" stroke="#777" /><path d="M1354 299l4 4" stroke="#777" strokeWidth="2.500" />
          <Caret x={1346.500} y={311.500} fill="#777" /><circle cx="1356" cy="326.500" r="3.500" stroke="#858585" /><path d="M1354 326.500h4" stroke="#858585" />
        </Icon>
        <NavLabel w={13}>2D</NavLabel>
      </NavBar>
      <CommandBar>
        <Icon box={[285, 672, 56, 26]}>
          <path d="M290 677v17M293 677v17" stroke="#d0d0d0" strokeWidth="2" strokeDasharray="2 1.200" />
          <path d="M299.500 680l8.500 8M308 680l-8.500 8" stroke="#d0d0d0" strokeWidth="1.800" />
          <path d="M321 691.500l8-8c-1-3 1-5 4-4.500l-2 2.500 1 1.500 2.500-1.500c1 3-1 5-4 4.500l-7.500 7z" fill="#d0d0d0" />
        </Icon>
        <CommandInput>
          <Icon box={[341, 673, 36, 24]}><path d="M345.500 680.500h15v11h-15zM345 682h16" stroke="#6e6e6e" strokeWidth="1.200" /><path d="M347.500 684.500l2.500 2-2.500 2M351.500 688.500h4" stroke="#6e6e6e" /><path d="M363 684h8l-4 4z" fill="#6e6e6e" /></Icon>
          <Fit w={119}>Digite um comando</Fit>
          <Icon box={[496, 673, 583, 24]}><path d="M1069.500 687.500h7l-3.500-4z" fill="#777" /></Icon>
        </CommandInput>
      </CommandBar>
    </Viewport>
  );
}

/* ---------- layout tabs and status bar ---------- */

const StatusBar = styled.div`
  height: 29px;
  flex: none;
  display: flex;
  background: #222932;
`;
const LayoutTabs = styled.div`
  width: 907px;
  display: flex;
  align-items: flex-start;
  padding: 1px 0 0 10px;
`;
const SheetTab = styled.div`
  width: ${(p) => p.$w}px;
  height: 17px;
  margin-right: -5px;
  padding-left: ${(p) => p.$pl}px;
  color: ${(p) => (p.$on ? '#fff' : '#aeb3b9')};
  font-weight: ${(p) => (p.$on ? 700 : 400)};
  background: ${(p) => (p.$on ? '#3c4555' : '#2d343f')};
  clip-path: path('${(p) => `M0 0H${p.$w}C${p.$w - 6} 3 ${p.$w - 4} 17 ${p.$w - 12} 17H12C4 17 6 3 0 0Z`}');
`;
const StatusGroup = styled.div`
  height: 24px;
  margin: 2px ${(p) => p.$gap ?? 1}px 0 0;
  display: flex;
  align-items: center;
  background: #3a4250;
`;
const PaperButton = styled(StatusGroup)`
  width: 39px;
  padding-left: 3px;
`;

function Status() {
  return (
    <StatusBar>
      <LayoutTabs>
        <SheetTab $w={69} $pl={13}><Fit w={40.500}>Modelo</Fit></SheetTab>
        <SheetTab $w={71} $pl={12.5} $on><Fit w={44}>Layout1</Fit></SheetTab>
        <SheetTab $w={69} $pl={13.5}><Fit w={42.500}>Layout2</Fit></SheetTab>
        <Icon box={[204, 700, 34, 17]}><path d="M218 701h15c-1 8-4 14-9 14h-12c3 0 3-13 6-14z" fill="#2d343f" /><path d="M223 704v8M219 708h8" stroke="#b5b8bd" strokeWidth="1.600" /></Icon>
      </LayoutTabs>
      <PaperButton $gap={3}><Fit w={32}>PAPEL</Fit></PaperButton>
      <StatusGroup>
        <Icon box={[949, 701, 104, 24]}>
          <path d="M953.500 706v14.500H969M954 715.500h4.500v5" stroke={LIGHT} strokeWidth="1.300" />
          <path d="M990 711a6 6 0 1 0 .5 4" stroke={LIGHT} strokeWidth="1.300" /><path d="M984 714l7-8M984 713.500h8M987.500 708c2 1.500 3 4 2.500 9" stroke={LIGHT} strokeWidth="1.200" /><Caret x={1005} y={713} s={4} />
          <path d="M1018 706l13 13" stroke="#e8505a" strokeWidth="1.300" /><path d="M1024.500 705v15" stroke="#4fcf68" strokeWidth="1.300" /><path d="M1023 711h3v3h-3z" fill="#eee" /><Caret x={1045} y={713} s={4} />
        </Icon>
      </StatusGroup>
      <StatusGroup $gap={3}>
        <Icon box={[1054, 701, 64, 24]}>
          <path d="M1059 718.500h15M1059 718l11-11" stroke={LIGHT} strokeWidth="1.500" /><Sq x={1066} y={712} c={LIGHT} />
          <path d="M1079 702h22v22h-22z" fill="#5e92c8" /><path d="M1084.500 711v9.500h13v-13H1088" stroke="#fff" /><path d="M1083 706h3.500v3.500h-3.500z" stroke="#fff" /><Caret x={1110} y={713} s={4} />
        </Icon>
      </StatusGroup>
      <StatusGroup $gap={1}>
        <Icon box={[1121, 701, 73, 24]}>
          <path d="M1126.500 711v9M1131 705.500h10M1128 720.500h2" stroke={LIGHT} strokeDasharray="2 1.500" /><path d="M1132.500 711.500h8v8h-8z" stroke={LIGHT} strokeDasharray="2 1" /><path d="M1134.500 713.500h4v4h-4z" stroke={LIGHT} /><path d="M1126 706l5 5M1126 709v-3.500h3.500" stroke={LIGHT} />
          <path d="M1155 706l3 7 5 6-5-1-3-3-3 3-4 2 5-7z" fill={LIGHT} stroke={LIGHT} strokeLinejoin="round" /><circle cx="1162" cy="707.500" r="2.300" stroke={LIGHT} />
          <path d="M1180 706l2 7 5 6-5-1-3-3-3 3-3 2 5-7z" fill={LIGHT} stroke={LIGHT} strokeLinejoin="round" /><path d="M1186 704l-3 4.500h4l-2.500 4" stroke={LIGHT} strokeWidth="1.300" />
        </Icon>
      </StatusGroup>
      <StatusGroup>
        <Icon box={[1195, 701, 41, 24]}>
          <circle cx="1207.500" cy="713" r="4" stroke={LIGHT} strokeWidth="3.500" /><circle cx="1207.500" cy="713" r="6.500" stroke={LIGHT} strokeWidth="2.500" strokeDasharray="2.600 2.505" /><Caret x={1228} y={713} s={4} />
        </Icon>
      </StatusGroup>
      <StatusGroup $gap={3}><Icon box={[1237, 701, 24, 24]}><path d="M1241 713h16M1249 705v16" stroke={LIGHT} strokeWidth="2" /></Icon></StatusGroup>
      <StatusGroup $gap={3}><Icon box={[1264, 701, 24, 24]}><path d="M1268.500 705.500h6v6h-6zM1274.500 714.500l3.500 6h-7z" stroke={LIGHT} strokeWidth="1.300" /><circle cx="1280.500" cy="711.500" r="2.700" stroke={LIGHT} strokeWidth="1.200" /></Icon></StatusGroup>
      <StatusGroup $gap={4}><Icon box={[1291, 701, 22, 24]}><path d="M1295 705h7l5 4v6h-12z" fill="#5f9fdd" /><path d="M1296 706l10 9M1302 705v5h5" stroke="#2f639b" /><path d="M1294 714h6v6h-6z" fill="#f4b33a" /><path d="M1301 716l3.500 3.500 5.500-6" stroke="#5ab345" strokeWidth="2.500" /></Icon></StatusGroup>
      <StatusGroup $gap={0}>
        <Icon box={[1317, 701, 46, 24]}>
          <path d="M1320.500 706.500h15v12h-15z" stroke={LIGHT} strokeWidth="1.300" /><path d="M1323 716v-3.500l3.500 3.500zM1333 709v3.500l-3.500-3.500z" fill={LIGHT} /><path d="M1324 715.500l2-2M1330 711.500l2-2" stroke={LIGHT} />
          <path d="M1344 707h16M1344 713h16M1344 719h16" stroke={LIGHT} strokeWidth="2" />
        </Icon>
      </StatusGroup>
    </StatusBar>
  );
}

/* ---------- Windows taskbar ---------- */

const Taskbar = styled.footer`
  height: 40px;
  flex: none;
  display: flex;
  color: #111;
  background: linear-gradient(90deg, #cbe5ea 0, #cde6ee 400px, #d5e2ee 800px, #d9e0ec 1366px);
`;
const SearchField = styled.div`
  width: 344px;
  height: 40px;
  display: flex;
  align-items: center;
  background: #fff;
  border: 1px solid #c4c6c8;
  color: #3a3a3a;
  font: 15px ${UI};
`;
const Apps = styled.div`
  position: relative;
  width: 680px;
  display: flex;
  flex: none;
  &::after {
    content: '';
    position: absolute;
    left: 0;
    right: 0;
    bottom: 0;
    height: 4px;
    background: linear-gradient(180deg, #f4f4f6 0 2px, #cfd6e2 2px);
  }
`;
const AppCell = styled.div`
  width: ${(p) => p.$w}px;
  background: ${(p) => p.$bg || 'transparent'};
`;
const Tray = styled.div`
  flex: 1;
  display: flex;
  align-items: center;
  margin-left: -14px;
`;
const Temperature = styled(Fit)`
  font-size: 14px;
  line-height: 20px;
`;
const Clock = styled.div`
  width: 56px;
  display: flex;
  flex-direction: column;
  align-items: center;
  gap: 2px;
  line-height: 17px;
  padding-bottom: 1px;
`;
const IconLabel = styled.text`
  font: bold ${(p) => p.$size}px ${UI};
  fill: ${(p) => p.$c || '#fff'};
`;

const Chrome = ({ cx, cy = 748 }) => (
  <g>
    <circle cx={cx} cy={cy} r="11" fill="#fdd24f" />
    <path d={`M${cx - 9.500} ${cy - 5.500}A11 11 0 0 1 ${cx + 9.500} ${cy - 5.500}H${cx}L${cx - 4.500} ${cy + 2.500}z`} fill="#dc4a3d" />
    <path d={`M${cx - 9.500} ${cy - 5.500}A11 11 0 0 0 ${cx - 1} ${cy + 11}L${cx + 4.500} ${cy + 2.500}L${cx - 4.500} ${cy + 2.500}z`} fill="#1fa15d" />
    <circle cx={cx} cy={cy} r="5" fill="#f3f3f3" /><circle cx={cx} cy={cy} r="4" fill="#4a87ee" />
  </g>
);
const TaskApp = ({ x, w, bg, children }) => (
  <AppCell $w={w} $bg={bg}><Icon box={[x, 728, w, 40]}>{children}</Icon></AppCell>
);

function WindowsTaskbar() {
  return (
    <Taskbar>
      <Icon box={[0, 728, 48, 40]}><path d="M16 742.300l7-1v6.200h-7zM24 741.200l8-1.200v7.500h-8zM16 748.500h7v6.200l-7-1zM24 748.500h8v7.500l-8-1.200z" fill="#000" /></Icon>
      <SearchField>
        <Icon box={[49, 729, 39, 38]}><circle cx="70.500" cy="745.500" r="5.300" stroke="#222" strokeWidth="1.400" /><path d="M66.500 749.500l-6 6" stroke="#222" strokeWidth="1.400" /></Icon>
        <Fit w={175}>Digite aqui para pesquisar</Fit>
      </SearchField>
      <Apps>
        <TaskApp x={392} w={48}><circle cx="416" cy="748" r="7" stroke="#000" strokeWidth="2.200" /></TaskApp>
        <TaskApp x={440} w={49}><path d="M456.500 740v2.500h10v-2.500M456.500 756v-2.500h10v2.500M456.500 745.500h10v5h-10zM470.500 740v3M470.500 749v7" stroke="#000" /><path d="M469 744h3v3h-3z" fill="#000" /></TaskApp>
        <TaskApp x={489} w={49}><Chrome cx={514} /></TaskApp>
        <TaskApp x={538} w={47}>
          <circle cx="561" cy="748" r="12" fill="#1275c8" /><path d="M549.500 745c2-12 21-12 23.500 2 0 6-8 7-10 4 1-3-1-6-5-6-4-1-7-1-8.500 0z" fill="#37bfa9" /><path d="M562 736c7 1 11 6 11 11 0 4-5 6-9 5 4-4 4-11-2-16z" fill="#6bdb52" /><path d="M557 745c-3 6 1 14 14 10-5 6-15 6-18 0-2-5 0-9 4-10z" fill="#124a93" /><path d="M562 744c-4 2-3 8 3 9 3 0 5 0 7-2-1 2-3 4-5 4-8 1-10-8-5-11z" fill="#d3e4ef" />
        </TaskApp>
        <TaskApp x={585} w={46}><path d="M596 744l12-8 12 8v14.500h-24z" fill="#1263b0" /><path d="M598 744h20l-10 8z" fill="#f2f2f2" /><path d="M596 744.500l12 8-12 6z" fill="#1a8fe0" /><path d="M620 744.500l-12 8 12 6z" fill="#38bdf3" /><path d="M596 758.500l12-7.500 12 7.500z" fill="#1c9be8" /></TaskApp>
        <TaskApp x={631} w={47}><path d="M649 737h18v21h-18z" fill="#21a366" /><path d="M658 737h9v7h-9z" fill="#33c481" /><path d="M649 744h9v7h-9z" fill="#107c41" /><path d="M649 751h18v7h-18z" fill="#185c37" /><path d="M643 742h12v12h-12z" fill="#107c41" /><IconLabel x="649" y="752" textAnchor="middle" $size={10}>X</IconLabel></TaskApp>
        <TaskApp x={678} w={46}><path d="M690 739h8l2 2h11v16h-21z" fill="#fcd462" /><path d="M690 739h8l2 2v2h-10z" fill="#dfa004" /><path d="M694 749h14v8h-4v-4h-6v4h-4z" fill="#3f9ae0" /></TaskApp>
        <TaskApp x={724} w={47}><path d="M741 737h18v21h-18z" fill="#2b7cd3" /><path d="M741 737h18v5h-18z" fill="#41a5ee" /><path d="M741 748h18v5h-18z" fill="#185abd" /><path d="M741 753h18v5h-18z" fill="#103f91" /><path d="M735 742h12v12h-12z" fill="#185abd" /><IconLabel x="741" y="752" textAnchor="middle" $size={10}>W</IconLabel></TaskApp>
        <TaskApp x={771} w={46}><Chrome cx={793} /><circle cx="799" cy="754" r="8" fill="#4f2ba0" /><IconLabel x="799" y="757.500" textAnchor="middle" $size={9}>E</IconLabel></TaskApp>
        <TaskApp x={817} w={46}><path d="M827 736h24v24h-24z" fill="#e8eef8" /><path d="M827 748h24v-12h-24z" fill="#cfdcf0" opacity=".5" /><IconLabel x="839.500" y="756.500" textAnchor="middle" $size={24} $c="#2d66a5">R</IconLabel></TaskApp>
        <TaskApp x={863} w={45} bg="#f4ae79"><path d="M874 736.500h22v21h-22z" fill="#c4060d" /><path d="M879 753V741h3zM891 753V741h-3zM885 744l4 9h-2.500l-1.500-3h-3z" fill="#fff" /></TaskApp>
        <TaskApp x={908} w={47}><ellipse cx="931" cy="744" rx="11" ry="6" transform="rotate(-12 931 744)" fill="#fff" stroke="#dd5558" strokeWidth="1.500" /><ellipse cx="930.500" cy="744" rx="7" ry="3.500" transform="rotate(-12 931 744)" stroke="#e39294" /><path d="M927 741l11 13M934 739l-1 15" stroke="#70777c" strokeWidth="1.500" /><circle cx="933.500" cy="756" r="2.300" stroke="#277dc4" strokeWidth="1.700" /><circle cx="940" cy="752.500" r="2.300" stroke="#277dc4" strokeWidth="1.700" /></TaskApp>
        <TaskApp x={955} w={45} bg="#eef2f9"><path d="M966 737h23v22h-23z" fill="#fae3dc" /><path d="M973.500 739h6.500l5.500 18h-5.500l-1-4h-5l-1.500 4h-5zM976.500 744l-2 5.500h3.800z" fill="#bc202a" fillRule="evenodd" /></TaskApp>
        <TaskApp x={1000} w={58}><circle cx="1037" cy="747" r="8" fill="#fcb42c" /><path d="M1032.500 757.500c-6 0-6-7.500 0-7.500 1-6 8-6.500 10-1 7-.5 7 8.500 1 8.500z" fill="#e4f1fc" stroke="#a9cbe8" /></TaskApp>
      </Apps>
      <Tray>
        <Temperature w={28.500}>32°C</Temperature>
        <Icon box={[1086.500, 728, 163.500, 40]}>
          <path d="M1105.500 751l5.500-5.500 5.500 5.500" stroke="#111" strokeWidth="1.300" />
          <path d="M1130.500 743.500h7v9h-7zM1138 746l3-1.500v7l-3-1.500M1131 740.500c2-1 6-1 8 0M1131 755.500c2 1 6 1 8 0" stroke="#111" strokeWidth="1.300" />
          <path d="M1155 753c-5 0-5-6 0-6 2-6 11-5 12 1v5z" fill="#6c6c6c" stroke="#333" /><circle cx="1162.500" cy="751.500" r="4.700" fill="#dc2f38" /><path d="M1160.500 749.500l4 4M1164.500 749.500l-4 4" stroke="#fff" strokeWidth="1.200" />
          <path d="M1179.500 744.500h11v8h-11z" stroke="#111" fill="none" /><path d="M1181 746h8v5h-8zM1191 746.500h1.500v4h-1.500zM1175 743h6v4h-6z" fill="#111" /><path d="M1176.500 741v3M1179.500 741v3M1178 747v3" stroke="#111" />
          <path d="M1203 755c0-7 5-11 11-11M1206 755c0-5 3-8 8-8M1209 755c0-3 2-5 5-5" stroke="#444" strokeWidth="1.200" /><circle cx="1213" cy="754" r="1.500" fill="#111" />
          <path d="M1223.500 746.500h3l4-4v12l-4-4h-3zM1232.500 746c1.300 1 1.300 4 0 5M1235 744c2 2 2 7 0 9M1237.500 742c3 3 3 10 0 13" stroke="#111" />
        </Icon>
        <Clock><Fit w={27}>18:20</Fit><Fit w={57}>15/09/2021</Fit></Clock>
        <Icon box={[1306, 728, 60, 40]}>
          <path d="M1325.500 740h16v12h-4l-3 4v-4h-9z" fill="#000" /><path d="M1328 743.500h11M1328 746.500h11" stroke="#dde4ee" />
          <circle cx="1340.500" cy="755" r="7.500" fill="#cdd0d4" stroke="#6d7176" /><IconLabel x="1340.500" y="759" textAnchor="middle" $size={11} $c="#111">5</IconLabel>
          <path d="M1361.500 728v40" stroke="#b2bac6" />
        </Icon>
      </Tray>
    </Taskbar>
  );
}

export default function App() {
  return (
    <Window>
      <Global />
      <TopBar />
      <Ribbon />
      <FileTabs>
        <FileTab $w={130}><Fit w={32}>Iniciar</Fit></FileTab>
        <FileTab $w={225} $on>
          <Fit w={180}>61005-ARQ-EX-003-CRT-TOR-R00*</Fit>
          <svg width="10" height="10"><path d="M1 1l7 7M8 1l-7 7" stroke="#a9adb3" strokeWidth="2" /></svg>
        </FileTab>
        <NewTab>
          <Icon box={[370, 147, 28, 22]}><path d="M372 152h14c6 0 5 13 8 14h-12c-6 0-6-11-10-14z" fill="#2d343f" /><path d="M383 155v8M379 159h8" stroke="#b5b8bd" strokeWidth="1.600" /></Icon>
        </NewTab>
      </FileTabs>
      <Canvas />
      <Status />
      <WindowsTaskbar />
    </Window>
  );
}
